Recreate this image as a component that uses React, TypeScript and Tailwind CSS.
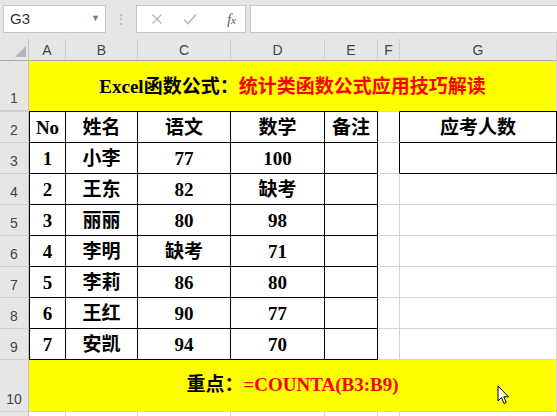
import React from 'react';

const cols = ['A', 'B', 'C', 'D', 'E', 'F', 'G'];

const students = [
  ['1', '小李', '77', '100'],
  ['2', '王东', '82', '缺考'],
  ['3', '丽丽', '80', '98'],
  ['4', '李明', '缺考', '71'],
  ['5', '李莉', '86', '80'],
  ['6', '王红', '90', '77'],
  ['7', '安凯', '94', '70'],
];

const grid = 'grid grid-cols-[29px_37px_72px_93px_94px_53px_22px_157px]';
const cellFont = { fontFamily: '"Liberation Serif", "Noto Sans CJK SC", serif' };
const uiFont = { fontFamily: '"Liberation Sans", Arial, sans-serif' };

const BLACK = 'border-black';
const GRAY = 'border-[#d4d4d4]';

function RowHead({ n, h, top = false }: { n: number; h: string; top?: boolean }) {
  return (
    <div
      className={`${h} flex items-end justify-center pb-[1px] bg-[#e6e6e6] border-r border-b border-r-[#c3c3c3] border-b-[#cfcfcf] text-[14px] text-[#444] ${top ? 'border-t border-t-[#cfcfcf]' : ''}`}
      style={uiFont}
    >
      {n}
    </div>
  );
}

// one cell of rows 2..9 with per-edge border colours
function Cell({ r, c, children }: { r: number; c: number; children?: React.ReactNode }) {
  const inTable = c <= 4;
  const inBox = c === 6 && r <= 3;
  const b = inTable || inBox ? 'border-b-black' : 'border-b-[#d4d4d4]';
  let rc = 'border-r-[#d4d4d4]';
  if (inTable || inBox || (c === 5 && r <= 3)) rc = 'border-r-black';
  let t = '';
  if (r === 2) t = c === 5 ? 'border-t border-t-[#d4d4d4]' : 'border-t border-t-black';
  const l = c === 0 ? 'border-l border-l-black' : '';
  return (
    <div
      className={`${r === 2 ? 'h-[32px]' : 'h-[31px]'} flex items-center justify-center pt-[2px] border-b border-r ${b} ${rc} ${t} ${l} text-[19px] font-bold text-black`}
      style={cellFont}
    >
      {children}
    </div>
  );
}

function Cursor() {
  return (
    <svg className="absolute left-[497px] top-[385px]" width="14" height="21" viewBox="0 0 14 21">
      <path
        d="M1 1 L1 16 L4.5 12.5 L7 18.5 L9.3 17.5 L6.8 11.8 L11.5 11.8 Z"
        fill="#fff"
        stroke="#000"
        strokeWidth="1"
        strokeLinejoin="round"
      />
    </svg>
  );
}

export default function App() {
  return (
    <div className="relative w-[557px] h-[416px] overflow-hidden bg-white">
      {/* name box + formula bar */}
      <div className="h-[39px] bg-[#e6e6e6] flex items-start pt-[5px] pl-[3px]" style={uiFont}>
        <div className="w-[103px] h-[28px] bg-white border border-[#c6c6c6] flex items-center justify-between pl-[6px] pr-[5px]">
          <span className="text-[15px] text-[#333]">G3</span>
          <span className="text-[9px] text-[#777]">▼</span>
        </div>
        <div className="w-[30px] h-[28px] flex items-center justify-center text-[#b4b4b4] text-[14px]">⋮</div>
        <div className="w-[110px] h-[28px] bg-white border border-[#c6c6c6] flex items-center">
          <svg className="ml-[14px]" width="12" height="12" viewBox="0 0 12 12">
            <path d="M1.5 1.5 L10.5 10.5 M10.5 1.5 L1.5 10.5" stroke="#b9b9b9" strokeWidth="1.4" />
          </svg>
          <svg className="ml-[20px]" width="14" height="12" viewBox="0 0 14 12">
            <path d="M1 6.5 L5 10.5 L13 1.5" stroke="#b9b9b9" strokeWidth="1.6" fill="none" />
          </svg>
          <span
            className="ml-auto mr-[9px] italic text-[14px] text-[#555]"
            style={{ fontFamily: '"Liberation Serif", serif' }}
          >
            f<span className="text-[11px]">x</span>
          </span>
        </div>
        <div className="flex-1 ml-[4px] h-[28px] bg-white border border-[#c6c6c6] border-r-0" />
      </div>

      {/* column headers */}
      <div className={grid}>
        <div className="h-[22px] bg-[#e6e6e6] border-b border-r border-b-[#ababab] border-r-[#c3c3c3] relative">
          <div className="absolute right-[2px] bottom-[3px] w-0 h-0 border-l-[11px] border-l-transparent border-b-[11px] border-b-[#b4b4b4]" />
        </div>
        {cols.map((c) => (
          <div
            key={c}
            className="h-[22px] bg-[#e6e6e6] border-b border-r border-b-[#ababab] border-r-[#cdcdcd] flex items-end justify-center text-[14px] text-[#444] leading-none pb-[3px]"
            style={uiFont}
          >
            {c}
          </div>
        ))}

        {/* row 1: title */}
        <RowHead n={1} h="h-[50px]" />
        <div
          className="col-span-7 h-[50px] bg-[#ffff00] border-r border-r-[#d4d4d4] flex items-center justify-center pt-[2px] text-[19px] font-bold"
          style={cellFont}
        >
          <span className="text-black">Excel函数公式：</span>
          <span className="text-[#f00]">统计类函数公式应用技巧解读</span>
        </div>

        {/* row 2: headings */}
        <RowHead n={2} h="h-[32px]" top />
        {['No', '姓名', '语文', '数学', '备注', '', '应考人数'].map((t, i) => (
          <Cell key={i} r={2} c={i}>
            {t}
          </Cell>
        ))}

        {/* rows 3..9 */}
        {students.map((s, i) => {
          const r = i + 3;
          return (
            <React.Fragment key={r}>
              <RowHead n={r} h="h-[31px]" />
              {[...s, '', '', ''].map((t, c) => (
                <Cell key={c} r={r} c={c}>
                  {t}
                </Cell>
              ))}
            </React.Fragment>
          );
        })}

        {/* row 10: formula */}
        <RowHead n={10} h="h-[52px]" />
        <div
          className="col-span-7 h-[52px] bg-[#ffff00] border-b border-r border-[#d4d4d4] flex items-center justify-center text-[19px] font-bold"
          style={cellFont}
        >
          <span className="text-black">重点：</span>
          <span className="text-[#f00]">=COUNTA(B3:B9)</span>
        </div>

        {/* row 11 (cut off) */}
        <div className="h-[20px] bg-[#e6e6e6] border-r border-r-[#c3c3c3]" />
        {cols.map((c) => (
          <div key={c} className={`h-[20px] border-r ${GRAY}`} />
        ))}
      </div>

      <Cursor />
    </div>
  );
}
